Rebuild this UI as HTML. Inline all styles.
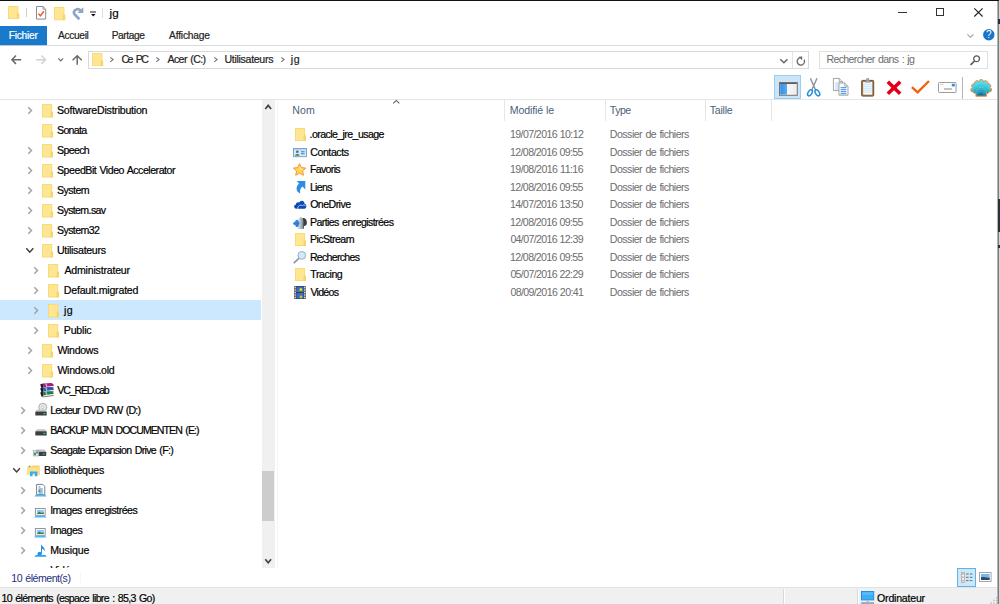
<!DOCTYPE html>
<html lang="fr"><head><meta charset="utf-8"><title>jg</title>
<style>

html,body{margin:0;padding:0;background:#fff;overflow:hidden}
#win{position:relative;width:1000px;height:604px;overflow:hidden;background:#fff;font-family:"Liberation Sans",sans-serif}
.t{position:absolute;white-space:pre;line-height:1;font-family:"Liberation Sans",sans-serif;-webkit-text-stroke:0.2px}
.g{-webkit-text-stroke:0}
.b{position:absolute}
svg{position:absolute;overflow:visible}

</style></head>
<body>
<div id="win">
<div class="b" style="left:0px;top:0px;width:998px;height:1.2px;background:#111;"></div><svg style="left:8.1px;top:6px" width="11.4" height="13" viewBox="0 0 11.4 13"><rect x="0" y="0" width="10.4" height="13" rx="0.6" fill="#f8d873"/><rect x="0.8" y="0.8" width="8.8" height="11.4" fill="#fee693"/><rect x="8.8" y="7.41" width="2.5" height="5.59" fill="#f7d46c"/></svg><div class="b" style="left:25.8px;top:7.5px;width:1.1px;height:9.5px;background:#cfcfcf;"></div><svg style="left:36px;top:6.2px" width="10.2" height="13.6" viewBox="0 0 10.2 13.6"><path d="M0.5 0.5 H7 L9.7 3.2 V13.1 H0.5 Z" fill="#fff" stroke="#8c8c8c" stroke-width="1"/><path d="M7 0.5 V3.2 H9.7" fill="none" stroke="#8c8c8c" stroke-width="0.8"/><path d="M2.4 7.6 L4.3 9.8 L8 5.2" fill="none" stroke="#e85a2c" stroke-width="1.4"/></svg><svg style="left:54px;top:6.5px" width="11.4" height="13.3" viewBox="0 0 11.4 13.3"><rect x="0" y="0" width="10.4" height="13.3" rx="0.6" fill="#f8d873"/><rect x="0.8" y="0.8" width="8.8" height="11.7" fill="#fee693"/><rect x="8.8" y="7.581" width="2.5" height="5.719" fill="#f7d46c"/></svg><svg style="left:72px;top:7px" width="12" height="13" viewBox="0 0 12 13"><path d="M7.4 12.2 L2.5 7.3 C1.2 5.6 2 2.8 5 2.2 C6.4 2 7.6 2.4 8.6 3.4" fill="none" stroke="#8fa3c6" stroke-width="2.7" stroke-linecap="butt"/><path d="M11.3 0.2 V5.9 H5.4 Z" fill="#8fa3c6"/></svg><div class="b" style="left:90px;top:11.2px;width:5.8px;height:1.4px;background:#8c8c8c;"></div><svg style="left:90.6px;top:14.1px" width="4.6" height="2.6" viewBox="0 0 4.6 2.6"><path d="M0 0 H4.6 L2.3 2.6 Z" fill="#111"/></svg><div class="b" style="left:102.3px;top:7.5px;width:1.2px;height:10px;background:#dedede;"></div><div class="b" style="left:898px;top:12.2px;width:8.8px;height:1px;background:#333;"></div><div class="b" style="left:936.3px;top:8.4px;width:7.8px;height:8px;background:transparent;box-sizing:border-box;border:1px solid #333"></div><svg style="left:974px;top:8.2px" width="9" height="8.8" viewBox="0 0 9 8.8"><path d="M0.3 0.3 L8.6 8.5 M8.6 0.3 L0.3 8.5" stroke="#222" stroke-width="1.1" fill="none"/></svg>
<div class="b" style="left:0px;top:26px;width:47px;height:19.4px;background:#1979ca;"></div><div class="b" style="left:0px;top:45px;width:998px;height:1px;background:#dadbdc;"></div><div class="b" style="left:0px;top:45px;width:47px;height:1px;background:#b9c9dc;"></div><svg style="left:966.6px;top:33.5px" width="6.8" height="3.6" viewBox="0 0 6.8 3.6"><path d="M0.3 0.3 L3.4 3.2 L6.5 0.3" fill="none" stroke="#a6a6a6" stroke-width="1.1"/></svg><svg style="left:982.6px;top:29.4px" width="11.6" height="11.6" viewBox="0 0 11.6 11.6"><circle cx="5.8" cy="5.8" r="5.7" fill="#1676cc"/><text x="5.8" y="9.3" font-family="Liberation Sans, sans-serif" font-size="10" fill="#fff" text-anchor="middle">?</text></svg>
<svg style="left:10.8px;top:55.3px" width="10.4" height="9.4" viewBox="0 0 10.4 9.4"><path d="M10.2 4.7 H1 M5 0.5 L0.9 4.7 L5 8.9" fill="none" stroke="#6a6a6a" stroke-width="1.5"/></svg><svg style="left:36px;top:55.3px" width="10.4" height="9.4" viewBox="0 0 10.4 9.4"><path d="M0.2 4.7 H9.4 M5.4 0.5 L9.5 4.7 L5.4 8.9" fill="none" stroke="#d2d2d2" stroke-width="1.5"/></svg><svg style="left:57.6px;top:57.8px" width="5.4" height="3.2" viewBox="0 0 5.4 3.2"><path d="M0.3 0.3 L2.7 2.8 L5.1 0.3" fill="none" stroke="#6a6a6a" stroke-width="1.2"/></svg><svg style="left:72.4px;top:55px" width="10.4" height="9.8" viewBox="0 0 10.4 9.8"><path d="M5.2 9.8 V1 M0.6 5.2 L5.2 0.8 L9.8 5.2" fill="none" stroke="#6a6a6a" stroke-width="1.5"/></svg><div class="b" style="left:88px;top:51px;width:721px;height:18px;background:#fff;box-sizing:border-box;border:1px solid #d9d9d9"></div><div class="b" style="left:792px;top:52px;width:1px;height:16px;background:#e4e4e4;"></div><svg style="left:92.3px;top:52.7px" width="11.3" height="13.1" viewBox="0 0 11.3 13.1"><rect x="0" y="0" width="10.3" height="13.1" rx="0.6" fill="#f8d873"/><rect x="0.8" y="0.8" width="8.7" height="11.5" fill="#fee693"/><rect x="8.7" y="7.467" width="2.5" height="5.633" fill="#f7d46c"/></svg><svg style="left:110.2px;top:57.1px" width="3.6" height="5.2" viewBox="0 0 3.6 5.2"><path d="M0.3 0.3 L3.1 2.6 L0.3 4.9" fill="none" stroke="#707070" stroke-width="1.1"/></svg><svg style="left:156.2px;top:57.1px" width="3.6" height="5.2" viewBox="0 0 3.6 5.2"><path d="M0.3 0.3 L3.1 2.6 L0.3 4.9" fill="none" stroke="#707070" stroke-width="1.1"/></svg><svg style="left:213.8px;top:57.1px" width="3.6" height="5.2" viewBox="0 0 3.6 5.2"><path d="M0.3 0.3 L3.1 2.6 L0.3 4.9" fill="none" stroke="#707070" stroke-width="1.1"/></svg><svg style="left:281px;top:57.1px" width="3.6" height="5.2" viewBox="0 0 3.6 5.2"><path d="M0.3 0.3 L3.1 2.6 L0.3 4.9" fill="none" stroke="#707070" stroke-width="1.1"/></svg><svg style="left:780.2px;top:58.8px" width="7.8" height="4.2" viewBox="0 0 7.8 4.2"><path d="M0.3 0.3 L3.9 3.8 L7.5 0.3" fill="none" stroke="#666" stroke-width="1.5"/></svg><svg style="left:796px;top:54.5px" width="10" height="11" viewBox="0 0 10 11"><path d="M8.1 4.6 A3.7 3.7 0 1 1 4.4 2.7" fill="none" stroke="#686868" stroke-width="1.3"/><path d="M2.6 1.7 L6.3 1.4 L6.1 5.2 Z" fill="#686868"/></svg><div class="b" style="left:819px;top:51px;width:168.5px;height:18px;background:#fff;box-sizing:border-box;border:1px solid #e0e0e0"></div><svg style="left:970px;top:54.5px" width="10.5" height="10.5" viewBox="0 0 10.5 10.5"><circle cx="6.6" cy="3.8" r="2.9" fill="none" stroke="#5a5a5a" stroke-width="1.3"/><path d="M4.5 6 L0.6 9.9" stroke="#5a5a5a" stroke-width="1.7" fill="none"/></svg>
<div class="b" style="left:774px;top:75px;width:27px;height:24px;background:#cce4f7;box-sizing:border-box;border:1px solid #9ccdf3"></div><svg style="left:779px;top:81.8px" width="18.8" height="13.8" viewBox="0 0 18.8 13.8"><defs><linearGradient id="pg" x1="0" x2="1"><stop offset="0" stop-color="#2f8fe2"/><stop offset="1" stop-color="#5aaaf0"/></linearGradient><linearGradient id="pw" x1="0" x2="1"><stop offset="0" stop-color="#fff"/><stop offset="1" stop-color="#ececec"/></linearGradient></defs><rect x="0.5" y="0.5" width="17.8" height="12.8" fill="url(#pw)" stroke="#747474" stroke-width="1"/><rect x="1.2" y="1.8" width="6.8" height="10.8" fill="url(#pg)"/><rect x="1" y="1" width="16.8" height="1" fill="#5c5c5c"/></svg><svg style="left:807px;top:78.3px" width="13.4" height="18.8" viewBox="0 0 13.4 18.8"><path d="M3.4 0.3 L8.6 12 M10 0.3 L4.8 12" stroke="#8b9098" stroke-width="1.4" fill="none"/><ellipse cx="3" cy="14.8" rx="1.9" ry="3.3" fill="none" stroke="#2b8fd8" stroke-width="1.5" transform="rotate(32 3 14.8)"/><ellipse cx="10.4" cy="14.8" rx="1.9" ry="3.3" fill="none" stroke="#2b8fd8" stroke-width="1.5" transform="rotate(-32 10.4 14.8)"/></svg><svg style="left:833.4px;top:78.2px" width="15.8" height="17.8" viewBox="0 0 15.8 17.8"><g transform="translate(0,0)"><path d="M0.4 0.4 H6.2 L9.4 3.6 V12.6 H0.4 Z" fill="#fff" stroke="#8c8c8c" stroke-width="0.8"/><path d="M6.2 0.4 V3.6 H9.4" fill="#e8e8e8" stroke="#8c8c8c" stroke-width="0.7"/><path d="M2 5 H7.8 M2 7 H7.8 M2 9 H7.8 M2 11 H7.8" stroke="#a9c9f5" stroke-width="0.9"/></g><g transform="translate(5.6,4.6)"><path d="M0.4 0.4 H6.2 L9.4 3.6 V12.6 H0.4 Z" fill="#fff" stroke="#8c8c8c" stroke-width="0.8"/><path d="M6.2 0.4 V3.6 H9.4" fill="#e8e8e8" stroke="#8c8c8c" stroke-width="0.7"/><path d="M2 5 H7.8 M2 7 H7.8 M2 9 H7.8 M2 11 H7.8" stroke="#5b9cf0" stroke-width="1.1"/></g></svg><svg style="left:860.9px;top:77.8px" width="13.4" height="18.8" viewBox="0 0 13.4 18.8"><rect x="0.7" y="2.4" width="12" height="15.7" rx="0.8" fill="#a77a50" stroke="#6e4a2a" stroke-width="1"/><rect x="2.2" y="4" width="9" height="12.6" fill="#fff"/><path d="M2.2 6.2 H11.2 M2.2 8.2 H11.2 M2.2 10.2 H11.2 M2.2 12.2 H11.2 M2.2 14.2 H11.2" stroke="#bfe0f4" stroke-width="1"/><path d="M4 4.2 V2.6 H5.6 V0.6 H7.8 V2.6 H9.4 V4.2 Z" fill="#a9a9a9" stroke="#7a7a7a" stroke-width="0.5"/></svg><svg style="left:886.2px;top:79.8px" width="16" height="15.6" viewBox="0 0 16 15.6"><path d="M1.8 1.8 L14.2 13.8 M14.2 1.8 L1.8 13.8" stroke="#e10018" stroke-width="3.6" fill="none"/></svg><svg style="left:911.4px;top:80.4px" width="19" height="14" viewBox="0 0 19 14"><path d="M0.9 7.2 L6.6 12.4 L18 1" stroke="#f0620f" stroke-width="2.4" fill="none"/></svg><svg style="left:938.2px;top:81.8px" width="18.6" height="11" viewBox="0 0 18.6 11"><rect x="0.5" y="0.5" width="17.6" height="10" rx="0.8" fill="#fdfdfd" stroke="#9c9c9c" stroke-width="1"/><rect x="13.8" y="1.8" width="3" height="2.6" fill="#2b8af0"/><rect x="6" y="6.2" width="8" height="1.6" fill="#b4b4b4"/><rect x="2" y="2" width="3.4" height="0.8" fill="#c8c8c8"/></svg><div class="b" style="left:962.2px;top:77px;width:1px;height:21.6px;background:#b4b4b4;"></div><svg style="left:970.8px;top:79px" width="20.4" height="17.6" viewBox="0 0 20.4 17.6"><defs><radialGradient id="sh" cx="0.5" cy="0.95" r="0.9"><stop offset="0" stop-color="#0f6c94"/><stop offset="0.3" stop-color="#1a8fb2"/><stop offset="0.6" stop-color="#3cc9dc"/><stop offset="1" stop-color="#62e6ec"/></radialGradient></defs><path d="M4.8 17.2 L5.2 14.8 C3.8 14.4 2.6 14 2.02 12.93 A1.70 1.70 0 0 1 1.67 8.77 A1.70 1.70 0 0 1 3.82 5.06 A1.70 1.70 0 0 1 7.84 2.89 A1.70 1.70 0 0 1 12.56 2.89 A1.70 1.70 0 0 1 16.58 5.06 A1.70 1.70 0 0 1 18.73 8.77 A1.70 1.70 0 0 1 18.38 12.93 C17.8 14 16.6 14.4 15.2 14.8 L15.6 17.2 Z" fill="url(#sh)" stroke="#f08a3c" stroke-width="1" stroke-linejoin="round"/><path d="M8.00 14.6 A2.20 2.53 0 0 1 12.40 14.6" fill="none" stroke="#9ff4f6" stroke-opacity="0.5" stroke-width="0.7"/><path d="M6.40 14.6 A3.80 4.37 0 0 1 14.00 14.6" fill="none" stroke="#9ff4f6" stroke-opacity="0.5" stroke-width="0.7"/><path d="M4.80 14.6 A5.40 6.21 0 0 1 15.60 14.6" fill="none" stroke="#9ff4f6" stroke-opacity="0.5" stroke-width="0.7"/></svg><div class="b" style="left:0px;top:99px;width:998px;height:1px;background:#e6e6e6;"></div>
<div class="b" style="left:0px;top:300px;width:260.5px;height:20px;background:#cce8ff;"></div><svg style="left:41.7px;top:103.5px" width="11.2" height="13.4" viewBox="0 0 11.2 13.4"><rect x="0" y="0" width="10.2" height="13.4" rx="0.6" fill="#f8d873"/><rect x="0.8" y="0.8" width="8.6" height="11.8" fill="#fee693"/><rect x="8.6" y="7.638" width="2.5" height="5.762" fill="#f7d46c"/></svg><svg style="left:41.7px;top:123.5px" width="11.2" height="13.4" viewBox="0 0 11.2 13.4"><rect x="0" y="0" width="10.2" height="13.4" rx="0.6" fill="#f8d873"/><rect x="0.8" y="0.8" width="8.6" height="11.8" fill="#fee693"/><rect x="8.6" y="7.638" width="2.5" height="5.762" fill="#f7d46c"/></svg><svg style="left:41.7px;top:143.5px" width="11.2" height="13.4" viewBox="0 0 11.2 13.4"><rect x="0" y="0" width="10.2" height="13.4" rx="0.6" fill="#f8d873"/><rect x="0.8" y="0.8" width="8.6" height="11.8" fill="#fee693"/><rect x="8.6" y="7.638" width="2.5" height="5.762" fill="#f7d46c"/></svg><svg style="left:41.7px;top:163.5px" width="11.2" height="13.4" viewBox="0 0 11.2 13.4"><rect x="0" y="0" width="10.2" height="13.4" rx="0.6" fill="#f8d873"/><rect x="0.8" y="0.8" width="8.6" height="11.8" fill="#fee693"/><rect x="8.6" y="7.638" width="2.5" height="5.762" fill="#f7d46c"/></svg><svg style="left:41.7px;top:183.5px" width="11.2" height="13.4" viewBox="0 0 11.2 13.4"><rect x="0" y="0" width="10.2" height="13.4" rx="0.6" fill="#f8d873"/><rect x="0.8" y="0.8" width="8.6" height="11.8" fill="#fee693"/><rect x="8.6" y="7.638" width="2.5" height="5.762" fill="#f7d46c"/></svg><svg style="left:41.7px;top:203.5px" width="11.2" height="13.4" viewBox="0 0 11.2 13.4"><rect x="0" y="0" width="10.2" height="13.4" rx="0.6" fill="#f8d873"/><rect x="0.8" y="0.8" width="8.6" height="11.8" fill="#fee693"/><rect x="8.6" y="7.638" width="2.5" height="5.762" fill="#f7d46c"/></svg><svg style="left:41.7px;top:223.5px" width="11.2" height="13.4" viewBox="0 0 11.2 13.4"><rect x="0" y="0" width="10.2" height="13.4" rx="0.6" fill="#f8d873"/><rect x="0.8" y="0.8" width="8.6" height="11.8" fill="#fee693"/><rect x="8.6" y="7.638" width="2.5" height="5.762" fill="#f7d46c"/></svg><svg style="left:41.7px;top:243.5px" width="11.2" height="13.4" viewBox="0 0 11.2 13.4"><rect x="0" y="0" width="10.2" height="13.4" rx="0.6" fill="#f8d873"/><rect x="0.8" y="0.8" width="8.6" height="11.8" fill="#fee693"/><rect x="8.6" y="7.638" width="2.5" height="5.762" fill="#f7d46c"/></svg><svg style="left:41.7px;top:343.5px" width="11.2" height="13.4" viewBox="0 0 11.2 13.4"><rect x="0" y="0" width="10.2" height="13.4" rx="0.6" fill="#f8d873"/><rect x="0.8" y="0.8" width="8.6" height="11.8" fill="#fee693"/><rect x="8.6" y="7.638" width="2.5" height="5.762" fill="#f7d46c"/></svg><svg style="left:41.7px;top:363.5px" width="11.2" height="13.4" viewBox="0 0 11.2 13.4"><rect x="0" y="0" width="10.2" height="13.4" rx="0.6" fill="#f8d873"/><rect x="0.8" y="0.8" width="8.6" height="11.8" fill="#fee693"/><rect x="8.6" y="7.638" width="2.5" height="5.762" fill="#f7d46c"/></svg><svg style="left:48.1px;top:263.5px" width="11.2" height="13.4" viewBox="0 0 11.2 13.4"><rect x="0" y="0" width="10.2" height="13.4" rx="0.6" fill="#f8d873"/><rect x="0.8" y="0.8" width="8.6" height="11.8" fill="#fee693"/><rect x="8.6" y="7.638" width="2.5" height="5.762" fill="#f7d46c"/></svg><svg style="left:48.1px;top:283.5px" width="11.2" height="13.4" viewBox="0 0 11.2 13.4"><rect x="0" y="0" width="10.2" height="13.4" rx="0.6" fill="#f8d873"/><rect x="0.8" y="0.8" width="8.6" height="11.8" fill="#fee693"/><rect x="8.6" y="7.638" width="2.5" height="5.762" fill="#f7d46c"/></svg><svg style="left:48.1px;top:303.5px" width="11.2" height="13.4" viewBox="0 0 11.2 13.4"><rect x="0" y="0" width="10.2" height="13.4" rx="0.6" fill="#f8d873"/><rect x="0.8" y="0.8" width="8.6" height="11.8" fill="#fee693"/><rect x="8.6" y="7.638" width="2.5" height="5.762" fill="#f7d46c"/></svg><svg style="left:48.1px;top:323.5px" width="11.2" height="13.4" viewBox="0 0 11.2 13.4"><rect x="0" y="0" width="10.2" height="13.4" rx="0.6" fill="#f8d873"/><rect x="0.8" y="0.8" width="8.6" height="11.8" fill="#fee693"/><rect x="8.6" y="7.638" width="2.5" height="5.762" fill="#f7d46c"/></svg><svg style="left:27.7px;top:107px" width="4" height="7" viewBox="0 0 4 7"><path d="M0.3 0.3 L3.5 3.5 L0.3 6.7" fill="none" stroke="#a3a3a3" stroke-width="1.5"/></svg><svg style="left:27.7px;top:147px" width="4" height="7" viewBox="0 0 4 7"><path d="M0.3 0.3 L3.5 3.5 L0.3 6.7" fill="none" stroke="#a3a3a3" stroke-width="1.5"/></svg><svg style="left:27.7px;top:167px" width="4" height="7" viewBox="0 0 4 7"><path d="M0.3 0.3 L3.5 3.5 L0.3 6.7" fill="none" stroke="#a3a3a3" stroke-width="1.5"/></svg><svg style="left:27.7px;top:187px" width="4" height="7" viewBox="0 0 4 7"><path d="M0.3 0.3 L3.5 3.5 L0.3 6.7" fill="none" stroke="#a3a3a3" stroke-width="1.5"/></svg><svg style="left:27.7px;top:207px" width="4" height="7" viewBox="0 0 4 7"><path d="M0.3 0.3 L3.5 3.5 L0.3 6.7" fill="none" stroke="#a3a3a3" stroke-width="1.5"/></svg><svg style="left:27.7px;top:227px" width="4" height="7" viewBox="0 0 4 7"><path d="M0.3 0.3 L3.5 3.5 L0.3 6.7" fill="none" stroke="#a3a3a3" stroke-width="1.5"/></svg><svg style="left:27.7px;top:347px" width="4" height="7" viewBox="0 0 4 7"><path d="M0.3 0.3 L3.5 3.5 L0.3 6.7" fill="none" stroke="#a3a3a3" stroke-width="1.5"/></svg><svg style="left:27.7px;top:367px" width="4" height="7" viewBox="0 0 4 7"><path d="M0.3 0.3 L3.5 3.5 L0.3 6.7" fill="none" stroke="#a3a3a3" stroke-width="1.5"/></svg><svg style="left:25.8px;top:247.9px" width="7.6" height="4.6" viewBox="0 0 7.6 4.6"><path d="M0.3 0.3 L3.8 4.2 L7.3 0.3" fill="none" stroke="#404040" stroke-width="1.5"/></svg><svg style="left:34.4px;top:267px" width="4" height="7" viewBox="0 0 4 7"><path d="M0.3 0.3 L3.5 3.5 L0.3 6.7" fill="none" stroke="#a3a3a3" stroke-width="1.5"/></svg><svg style="left:34.4px;top:287px" width="4" height="7" viewBox="0 0 4 7"><path d="M0.3 0.3 L3.5 3.5 L0.3 6.7" fill="none" stroke="#a3a3a3" stroke-width="1.5"/></svg><svg style="left:34.4px;top:307px" width="4" height="7" viewBox="0 0 4 7"><path d="M0.3 0.3 L3.5 3.5 L0.3 6.7" fill="none" stroke="#a3a3a3" stroke-width="1.5"/></svg><svg style="left:34.4px;top:327px" width="4" height="7" viewBox="0 0 4 7"><path d="M0.3 0.3 L3.5 3.5 L0.3 6.7" fill="none" stroke="#a3a3a3" stroke-width="1.5"/></svg><svg style="left:20.8px;top:407px" width="4" height="7" viewBox="0 0 4 7"><path d="M0.3 0.3 L3.5 3.5 L0.3 6.7" fill="none" stroke="#a3a3a3" stroke-width="1.5"/></svg><svg style="left:20.8px;top:427px" width="4" height="7" viewBox="0 0 4 7"><path d="M0.3 0.3 L3.5 3.5 L0.3 6.7" fill="none" stroke="#a3a3a3" stroke-width="1.5"/></svg><svg style="left:20.8px;top:447px" width="4" height="7" viewBox="0 0 4 7"><path d="M0.3 0.3 L3.5 3.5 L0.3 6.7" fill="none" stroke="#a3a3a3" stroke-width="1.5"/></svg><svg style="left:20.8px;top:487px" width="4" height="7" viewBox="0 0 4 7"><path d="M0.3 0.3 L3.5 3.5 L0.3 6.7" fill="none" stroke="#a3a3a3" stroke-width="1.5"/></svg><svg style="left:20.8px;top:507px" width="4" height="7" viewBox="0 0 4 7"><path d="M0.3 0.3 L3.5 3.5 L0.3 6.7" fill="none" stroke="#a3a3a3" stroke-width="1.5"/></svg><svg style="left:20.8px;top:527px" width="4" height="7" viewBox="0 0 4 7"><path d="M0.3 0.3 L3.5 3.5 L0.3 6.7" fill="none" stroke="#a3a3a3" stroke-width="1.5"/></svg><svg style="left:20.8px;top:547px" width="4" height="7" viewBox="0 0 4 7"><path d="M0.3 0.3 L3.5 3.5 L0.3 6.7" fill="none" stroke="#a3a3a3" stroke-width="1.5"/></svg><svg style="left:12.7px;top:468.2px" width="7.2" height="4.4" viewBox="0 0 7.2 4.4"><path d="M0.3 0.3 L3.6 4 L6.9 0.3" fill="none" stroke="#404040" stroke-width="1.5"/></svg><svg style="left:39.7px;top:383.4px" width="13.8" height="13.8" viewBox="0 0 13.8 13.8"><g transform="translate(0,0)"><path d="M0.2 1.4 L2.6 0.5 L3.8 4.3 L1.5 5.3 Z" fill="#2a1420"/><path d="M2.6 0.5 L11.6 0 L13.6 1.5 L13.6 2.9 L3.8 4.3 Z" fill="#a81c74"/><path d="M5.2 0.4 L6.6 0.3 L7.6 3.7 L6.2 3.9 Z" fill="#d8a8c8"/><path d="M3.8 4.3 L13.6 2.9 L13.6 4.2 L4 5.5 Z" fill="#f0f0f0"/><path d="M1.5 5.3 L4 5.6 L13.6 4.3" fill="none" stroke="#3a2a30" stroke-width="0.6"/></g><g transform="translate(0,4.1)"><path d="M0.2 1.4 L2.6 0.5 L3.8 4.3 L1.5 5.3 Z" fill="#2a1420"/><path d="M2.6 0.5 L11.6 0 L13.6 1.5 L13.6 2.9 L3.8 4.3 Z" fill="#2458b4"/><path d="M5.2 0.4 L6.6 0.3 L7.6 3.7 L6.2 3.9 Z" fill="#a8c0e8"/><path d="M3.8 4.3 L13.6 2.9 L13.6 4.2 L4 5.5 Z" fill="#f0f0f0"/><path d="M1.5 5.3 L4 5.6 L13.6 4.3" fill="none" stroke="#3a2a30" stroke-width="0.6"/></g><g transform="translate(0,8.2)"><path d="M0.2 1.4 L2.6 0.5 L3.8 4.3 L1.5 5.3 Z" fill="#2a1420"/><path d="M2.6 0.5 L11.6 0 L13.6 1.5 L13.6 2.9 L3.8 4.3 Z" fill="#1e8040"/><path d="M5.2 0.4 L6.6 0.3 L7.6 3.7 L6.2 3.9 Z" fill="#a0d0b0"/><path d="M3.8 4.3 L13.6 2.9 L13.6 4.2 L4 5.5 Z" fill="#f0f0f0"/><path d="M1.5 5.3 L4 5.6 L13.6 4.3" fill="none" stroke="#3a2a30" stroke-width="0.6"/></g></svg><svg style="left:34.5px;top:403px" width="12" height="13" viewBox="0 0 12 13"><circle cx="7.8" cy="4.3" r="4" fill="#e9e9ec" stroke="#9a9aa0" stroke-width="0.8"/><circle cx="7.8" cy="4.3" r="1.3" fill="#fff" stroke="#a8a8ae" stroke-width="0.6"/><path d="M0.3 8.4 L2 6.6 H10 L11.7 8.4 Z" fill="#c8c8cc"/><rect x="0.3" y="8.4" width="11.4" height="4.2" rx="0.5" fill="#3c3e42"/><rect x="8.4" y="10" width="2" height="1.2" fill="#38d04a"/></svg><svg style="left:34.5px;top:429.4px" width="12" height="6.6" viewBox="0 0 12 6.6"><path d="M0.3 2.3 L2 0.3 H10 L11.7 2.3 Z" fill="#c4c4c8"/><rect x="0.3" y="2.3" width="11.4" height="4.1" rx="0.5" fill="#3c3e42"/><rect x="8.4" y="3.8" width="2" height="1.2" fill="#38d04a"/></svg><svg style="left:33.2px;top:449.4px" width="13.4" height="7.2" viewBox="0 0 13.4 7.2"><path d="M1.6 2.8 L3.2 0.6 H11.6 L13.1 2.8 Z" fill="#c4c4c8"/><rect x="1.6" y="2.8" width="11.6" height="4.2" rx="0.5" fill="#3c3e42"/><rect x="0.2" y="1.6" width="5.6" height="5.4" fill="#dfe6ea" stroke="#8a9096" stroke-width="0.5"/><rect x="1" y="3.6" width="2" height="2.6" fill="#3a9a4a"/><rect x="3.2" y="2.4" width="1.8" height="2" fill="#4a7ac8"/><rect x="9.8" y="4.4" width="2" height="1.2" fill="#38d04a"/></svg><svg style="left:26.6px;top:465.2px" width="13.4" height="11.4" viewBox="0 0 13.4 11.4"><path d="M0.4 1.6 H4.6 L5.8 0.4 H12.6 V10 H0.4 Z" fill="#f8d26a"/><rect x="0.4" y="2.6" width="12.6" height="7.6" fill="#fde08a"/><rect x="1.8" y="0.8" width="1.6" height="1.2" fill="#4aa84a"/><path d="M3 11.3 V6.4 H10.4 V11.3 H7.8 V8.6 H5.6 V11.3 Z" fill="#30b2f2"/></svg><svg style="left:34px;top:484.2px" width="12.6" height="12.6" viewBox="0 0 12.6 12.6"><path d="M2.6 0.4 H8.8 L10.8 2.4 V10.6 H2.6 Z" fill="#fff" stroke="#7c8288" stroke-width="1"/><path d="M4.6 3 H6.4 M4.6 5 H8.8 M4.6 7 H8.8 M4.6 9 H8.8" stroke="#3a8ad8" stroke-width="1"/><rect x="4.4" y="5.8" width="2" height="2.4" fill="#5aa04a"/><path d="M1.8 10.8 H11.4 L12.6 12.6 H0.4 Z" fill="#4ab8f6"/></svg><svg style="left:34px;top:508px" width="12.6" height="9.6" viewBox="0 0 12.6 9.6"><rect x="1.4" y="0.5" width="9.8" height="6.8" fill="#fff" stroke="#8a8f96" stroke-width="0.9"/><rect x="2.8" y="1.9" width="7" height="4" fill="#8ecaf4"/><path d="M2.8 5.9 L5.4 3.6 L7.4 5 L9.8 4.2 V5.9 Z" fill="#3e7a46"/><path d="M1.6 7.8 H11 L12.4 9.6 H0.2 Z" fill="#4ab8f6"/></svg><svg style="left:34px;top:528px" width="12.6" height="9.6" viewBox="0 0 12.6 9.6"><rect x="1.4" y="0.5" width="9.8" height="6.8" fill="#fff" stroke="#8a8f96" stroke-width="0.9"/><rect x="2.8" y="1.9" width="7" height="4" fill="#8ecaf4"/><path d="M2.8 5.9 L5.4 3.6 L7.4 5 L9.8 4.2 V5.9 Z" fill="#3e7a46"/><path d="M1.6 7.8 H11 L12.4 9.6 H0.2 Z" fill="#4ab8f6"/></svg><svg style="left:34px;top:544px" width="12.6" height="13" viewBox="0 0 12.6 13"><path d="M7 0.2 C8 2.6 11.6 3.4 10.6 7.4 C10.2 5.6 8.8 5 8 4.8 V9.6 C8 11.6 3.4 12.2 3.4 9.8 C3.4 8 6 7.6 7 8.4 Z" fill="#1e8ef0"/><path d="M1.8 11 H11.4 L12.6 12.8 H0.4 Z" fill="#2aa0f4"/></svg><div class="b" style="left:0;top:560px;width:261px;height:8px;overflow:hidden"><span class="t" style="left:50.4px;top:5.1px;font-size:10.6px;letter-spacing:-0.3px;color:#000">Vidéos</span></div><div class="b" style="left:79.5px;top:573px;width:1px;height:10px;background:#f5f5f5;"></div><div class="b" style="left:277px;top:100px;width:1px;height:468px;background:#f6f6f6;"></div><div class="b" style="left:262px;top:100px;width:13px;height:468px;background:#f0f0f0;"></div><div class="b" style="left:262px;top:471.2px;width:12.2px;height:49.7px;background:#cdcdcd;"></div><svg style="left:264.9px;top:105.4px" width="6.4" height="4.4" viewBox="0 0 6.4 4.4"><path d="M0.3 4.1 L3.2 0.4 L6.1 4.1" fill="none" stroke="#404040" stroke-width="1.7"/></svg><svg style="left:264.8px;top:559.2px" width="6.4" height="4.2" viewBox="0 0 6.4 4.2"><path d="M0.3 0.3 L3.2 3.8 L6.1 0.3" fill="none" stroke="#404040" stroke-width="1.7"/></svg>
<div class="b" style="left:504px;top:100px;width:1px;height:21px;background:#e6e6e6;"></div><div class="b" style="left:605px;top:100px;width:1px;height:21px;background:#e6e6e6;"></div><div class="b" style="left:704.5px;top:100px;width:1px;height:21px;background:#e6e6e6;"></div><div class="b" style="left:771px;top:100px;width:1px;height:21px;background:#e6e6e6;"></div><svg style="left:393px;top:100px" width="6.6" height="3.6" viewBox="0 0 6.6 3.6"><path d="M0.3 3.3 L3.3 0.4 L6.3 3.3" fill="none" stroke="#5c5c5c" stroke-width="1.1"/></svg>
<svg style="left:295.1px;top:128px" width="11.1" height="13" viewBox="0 0 11.1 13"><rect x="0" y="0" width="10.1" height="13" rx="0.6" fill="#f8d873"/><rect x="0.8" y="0.8" width="8.5" height="11.4" fill="#fee693"/><rect x="8.5" y="7.41" width="2.5" height="5.59" fill="#f7d46c"/></svg><svg style="left:293px;top:148.1px" width="14" height="9.4" viewBox="0 0 14 9.4"><rect x="0.5" y="0.5" width="13" height="8.2" fill="#d4e9fa" stroke="#6a9fd0" stroke-width="0.9"/><rect x="1.2" y="1.2" width="11.6" height="1.2" fill="#b4d4f0"/><circle cx="4.3" cy="3.7" r="1.3" fill="#8a5a3a"/><path d="M2 7.8 C2 5.4 6.6 5.4 6.6 7.8 Z" fill="#3a8c4c"/><path d="M8 3.8 H11.6 M8 5.8 H11.6" stroke="#3a7ac4" stroke-width="1"/></svg><svg style="left:293.3px;top:163.4px" width="13.2" height="12.8" viewBox="0 0 13.2 12.8"><path d="M6.6 0.6 L8.5 4.6 L12.8 5.1 L9.6 8 L10.5 12.3 L6.6 10.1 L2.7 12.3 L3.6 8 L0.4 5.1 L4.7 4.6 Z" fill="#ffd553" stroke="#f2963a" stroke-width="1" stroke-linejoin="round"/><path d="M6.6 3 L7.8 5.6 L10.4 5.9 L6.6 7.5 Z" fill="#ffe89a"/></svg><svg style="left:295.6px;top:181.2px" width="9.4" height="12.6" viewBox="0 0 9.4 12.6"><path d="M0.9 0.1 H9.3 V8.4 L6.5 5.5 C4.6 7 3.5 9.2 4.3 12.4 C0.4 11 -1 6.6 3 2.5 Z" fill="#2a8ee6"/></svg><svg style="left:293.8px;top:200px" width="12.4" height="9" viewBox="0 0 12.4 9"><path d="M2.4 8.8 C-0.6 8.6 -0.4 4.8 2 4.6 C2 2.6 4 1.8 5.2 2.8 C6 -0.2 10.4 -0.2 10.6 3.8 C13 4 13 8.6 10.4 8.8 Z" fill="#0b49b8"/><path d="M3.6 8.8 C3.8 5.8 6.4 4.4 8.4 5.6 C9.2 4.6 11.2 4.8 11.8 6.2" fill="none" stroke="#fff" stroke-width="0.7"/></svg><svg style="left:293px;top:216.5px" width="14" height="12.4" viewBox="0 0 14 12.4"><defs><linearGradient id="sg" x1="0" x2="1"><stop offset="0" stop-color="#eef1f3"/><stop offset="0.55" stop-color="#a9b6be"/><stop offset="1" stop-color="#73848e"/></linearGradient></defs><path d="M9.4 1.2 C12.4 0.6 14.2 3.4 13.8 6.4 C13.6 8.4 12.2 9.2 11 8.8 L11 11.6 L8.6 11.6 Z" fill="#3a3c3f"/><path d="M4.4 12 C3.8 9 5 6.4 5.2 3.6 C5.6 1 7 0.1 8.4 0.3 C10 0.7 10.6 3 10.4 6 C10.2 9 10.6 11 10.8 12 Z" fill="url(#sg)"/><circle cx="1.9" cy="6.4" r="1.7" fill="#2a80d8"/><circle cx="3.9" cy="4.4" r="1.7" fill="#3a8ce0"/><circle cx="4" cy="8.4" r="1.6" fill="#2a80d8"/><circle cx="4.6" cy="6.4" r="1.8" fill="#2a80d8"/></svg><svg style="left:295.1px;top:233px" width="11.1" height="13" viewBox="0 0 11.1 13"><rect x="0" y="0" width="10.1" height="13" rx="0.6" fill="#f8d873"/><rect x="0.8" y="0.8" width="8.5" height="11.4" fill="#fee693"/><rect x="8.5" y="7.41" width="2.5" height="5.59" fill="#f7d46c"/></svg><svg style="left:293.4px;top:251.4px" width="13.4" height="12.8" viewBox="0 0 13.4 12.8"><circle cx="8.8" cy="4.4" r="3.9" fill="#d2e9fb" stroke="#8ca6c0" stroke-width="0.9"/><path d="M5.8 7.4 L0.8 12.2" stroke="#8a96a4" stroke-width="1.6" fill="none"/></svg><svg style="left:295.1px;top:268px" width="11.1" height="13" viewBox="0 0 11.1 13"><rect x="0" y="0" width="10.1" height="13" rx="0.6" fill="#f8d873"/><rect x="0.8" y="0.8" width="8.5" height="11.4" fill="#fee693"/><rect x="8.5" y="7.41" width="2.5" height="5.59" fill="#f7d46c"/></svg><svg style="left:294.1px;top:286.3px" width="12" height="13" viewBox="0 0 12 13"><rect x="0" y="0" width="11.9" height="13" fill="#6c6c6c"/><rect x="2.1" y="0.3" width="7.7" height="12.4" fill="#26282c"/><rect x="2.3" y="0.7" width="7.3" height="5.5" fill="#2c6ee0"/><rect x="2.3" y="7" width="7.3" height="5.4" fill="#2c6ee0"/><circle cx="6.9" cy="3.5" r="1.5" fill="#e6cf20"/><rect x="2.5" y="4.6" width="2.2" height="1.3" fill="#e0503a"/><rect x="4.9" y="5.2" width="4.6" height="1" fill="#2a9a3a"/><circle cx="7" cy="11" r="1.4" fill="#d8c020"/><rect x="6" y="7" width="2" height="1.6" fill="#a05a40"/><rect x="0.7" y="0.9" width="1" height="1.2" fill="#f4f4f4"/><rect x="10.2" y="0.9" width="1" height="1.2" fill="#f4f4f4"/><rect x="0.7" y="3.4" width="1" height="1.2" fill="#f4f4f4"/><rect x="10.2" y="3.4" width="1" height="1.2" fill="#f4f4f4"/><rect x="0.7" y="5.9" width="1" height="1.2" fill="#f4f4f4"/><rect x="10.2" y="5.9" width="1" height="1.2" fill="#f4f4f4"/><rect x="0.7" y="8.4" width="1" height="1.2" fill="#f4f4f4"/><rect x="10.2" y="8.4" width="1" height="1.2" fill="#f4f4f4"/><rect x="0.7" y="10.9" width="1" height="1.2" fill="#f4f4f4"/><rect x="10.2" y="10.9" width="1" height="1.2" fill="#f4f4f4"/></svg>
<div class="b" style="left:0px;top:587px;width:998px;height:17px;background:#f0f0f0;"></div><div class="b" style="left:0px;top:587px;width:998px;height:1px;background:#e2e2e2;"></div><div class="b" style="left:783px;top:589px;width:1px;height:15px;background:#d8d8d8;"></div><div class="b" style="left:784px;top:589px;width:1px;height:15px;background:#fff;"></div><div class="b" style="left:857px;top:589px;width:1px;height:15px;background:#d8d8d8;"></div><div class="b" style="left:858px;top:589px;width:1px;height:15px;background:#fff;"></div><svg style="left:861px;top:591.2px" width="13.4" height="12.8" viewBox="0 0 13.4 12.8"><rect x="0.5" y="0.5" width="12.2" height="8.4" fill="#3aaef6" stroke="#2090e2" stroke-width="1"/><rect x="1.3" y="1.3" width="10.6" height="2.6" fill="#58bcf8"/><rect x="5.4" y="9.4" width="2.4" height="1.8" fill="#b4bcc6"/><rect x="0.1" y="11.3" width="13" height="1.6" fill="#8c9cb6"/></svg><div class="b" style="left:957.4px;top:568px;width:18.6px;height:19.3px;background:#cce8f7;box-sizing:border-box;border:1px solid #62b2ea"></div><svg style="left:961px;top:572px" width="12" height="11" viewBox="0 0 12 11"><rect x="0.4" y="0.4" width="3" height="10" fill="#fff" stroke="#9aa0a8" stroke-width="0.7"/><rect x="1" y="1.2" width="1.8" height="1.8" fill="#e8a0a0"/><rect x="1" y="4.4" width="1.8" height="1.8" fill="#e8a0a0"/><rect x="1" y="7.6" width="1.8" height="1.8" fill="#e8a0a0"/><path d="M5 2 H7.6 M8.8 2 H11.4 M5 5.3 H7.6 M8.8 5.3 H11.4 M5 8.6 H7.6 M8.8 8.6 H11.4" stroke="#6a7078" stroke-width="1"/></svg><svg style="left:978.8px;top:572px" width="12.6" height="10" viewBox="0 0 12.6 10"><rect x="0.5" y="0.5" width="11.6" height="9" fill="#fff" stroke="#9a9ea4" stroke-width="0.9"/><rect x="2" y="2" width="8.6" height="6" fill="#7ab8e8"/><path d="M2 8 V5.4 C4.4 4.4 7.4 6.4 10.6 5.6 V8 Z" fill="#2c4a6a"/></svg><svg style="left:987.5px;top:596.5px" width="10" height="7" viewBox="0 0 10 7"><rect x="8" y="0" width="1.4" height="1.4" fill="#b8b8b8"/><rect x="5.3" y="2.7" width="1.4" height="1.4" fill="#b8b8b8"/><rect x="8" y="2.7" width="1.4" height="1.4" fill="#b8b8b8"/><rect x="2.6" y="5.4" width="1.4" height="1.4" fill="#b8b8b8"/><rect x="5.3" y="5.4" width="1.4" height="1.4" fill="#b8b8b8"/><rect x="8" y="5.4" width="1.4" height="1.4" fill="#b8b8b8"/></svg><div class="b" style="left:997px;top:0px;width:1px;height:604px;background:#b4b4b4;"></div><div class="b" style="left:998px;top:0px;width:1px;height:604px;background:#7c7c7c;"></div><div class="b" style="left:999px;top:0px;width:1px;height:604px;background:#d6d6d6;"></div><div class="b" style="left:0px;top:0px;width:998.5px;height:1.2px;background:#111;"></div><div class="b" style="left:998px;top:18.5px;width:2px;height:5.5px;background:#2c2a4a;"></div><div class="b" style="left:998px;top:199.2px;width:2px;height:33px;background:#2c3038;"></div><div class="b" style="left:998px;top:245px;width:2px;height:3.2px;background:#2c3038;"></div>
<span class="t" style="left:109.44px;top:7.00px;font-size:11.6px;letter-spacing:0.207px;word-spacing:-0.331px;color:#000">jg</span>
<span class="t" style="left:8.85px;top:31.30px;font-size:10.2px;letter-spacing:-0.272px;word-spacing:0.435px;color:#fff">Fichier</span>
<span class="t" style="left:58.10px;top:31.30px;font-size:10.2px;letter-spacing:-0.343px;word-spacing:0.549px;color:#222">Accueil</span>
<span class="t" style="left:111.75px;top:31.30px;font-size:10.2px;letter-spacing:-0.434px;word-spacing:0.694px;color:#222">Partage</span>
<span class="t" style="left:169.10px;top:31.30px;font-size:10.2px;letter-spacing:-0.184px;word-spacing:0.294px;color:#222">Affichage</span>
<span class="t" style="left:121.48px;top:54.00px;font-size:10.6px;letter-spacing:-1.546px;word-spacing:2.474px;color:#222">Ce PC</span>
<span class="t" style="left:167.40px;top:54.00px;font-size:10.6px;letter-spacing:-0.568px;word-spacing:0.909px;color:#222">Acer (C:)</span>
<span class="t" style="left:224.47px;top:54.00px;font-size:10.6px;letter-spacing:-0.310px;word-spacing:0.496px;color:#222">Utilisateurs</span>
<span class="t" style="left:290.74px;top:54.00px;font-size:10.6px;letter-spacing:0.658px;word-spacing:-1.052px;color:#222">jg</span>
<span class="t g" style="left:826.51px;top:54.30px;font-size:10.6px;letter-spacing:-0.660px;word-spacing:1.057px;color:#6d6d6d">Rechercher dans : jg</span>
<span class="t" style="left:57.04px;top:104.70px;font-size:10.6px;letter-spacing:-0.228px;word-spacing:0.364px;color:#000">SoftwareDistribution</span>
<span class="t" style="left:57.04px;top:124.70px;font-size:10.6px;letter-spacing:-0.684px;word-spacing:1.095px;color:#000">Sonata</span>
<span class="t" style="left:57.04px;top:144.70px;font-size:10.6px;letter-spacing:-0.645px;word-spacing:1.032px;color:#000">Speech</span>
<span class="t" style="left:57.04px;top:164.70px;font-size:10.6px;letter-spacing:-0.473px;word-spacing:0.757px;color:#000">SpeedBit Video Accelerator</span>
<span class="t" style="left:57.04px;top:184.70px;font-size:10.6px;letter-spacing:-0.558px;word-spacing:0.893px;color:#000">System</span>
<span class="t" style="left:57.04px;top:204.70px;font-size:10.6px;letter-spacing:-0.631px;word-spacing:1.009px;color:#000">System.sav</span>
<span class="t" style="left:57.04px;top:224.70px;font-size:10.6px;letter-spacing:-0.619px;word-spacing:0.991px;color:#000">System32</span>
<span class="t" style="left:56.97px;top:244.70px;font-size:10.6px;letter-spacing:-0.310px;word-spacing:0.496px;color:#000">Utilisateurs</span>
<span class="t" style="left:64.40px;top:264.70px;font-size:10.6px;letter-spacing:-0.202px;word-spacing:0.323px;color:#000">Administrateur</span>
<span class="t" style="left:63.81px;top:284.70px;font-size:10.6px;letter-spacing:-0.205px;word-spacing:0.328px;color:#000">Default.migrated</span>
<span class="t" style="left:64.04px;top:304.70px;font-size:10.6px;letter-spacing:0.358px;word-spacing:-0.572px;color:#000">jg</span>
<span class="t" style="left:63.81px;top:324.70px;font-size:10.6px;letter-spacing:-0.207px;word-spacing:0.331px;color:#000">Public</span>
<span class="t" style="left:57.40px;top:344.70px;font-size:10.6px;letter-spacing:-0.323px;word-spacing:0.517px;color:#000">Windows</span>
<span class="t" style="left:57.40px;top:364.70px;font-size:10.6px;letter-spacing:-0.281px;word-spacing:0.449px;color:#000">Windows.old</span>
<span class="t" style="left:57.37px;top:384.70px;font-size:10.6px;letter-spacing:-1.181px;word-spacing:1.889px;color:#000">VC_RED.cab</span>
<span class="t" style="left:50.21px;top:404.70px;font-size:10.6px;letter-spacing:-0.828px;word-spacing:1.325px;color:#000">Lecteur DVD RW (D:)</span>
<span class="t" style="left:50.21px;top:424.70px;font-size:10.6px;letter-spacing:-0.972px;word-spacing:1.555px;color:#000">BACKUP MIJN DOCUMENTEN (E:)</span>
<span class="t" style="left:50.34px;top:444.70px;font-size:10.6px;letter-spacing:-0.704px;word-spacing:1.127px;color:#000">Seagate Expansion Drive (F:)</span>
<span class="t" style="left:43.91px;top:464.70px;font-size:10.6px;letter-spacing:-0.275px;word-spacing:0.440px;color:#000">Bibliothèques</span>
<span class="t" style="left:50.21px;top:484.70px;font-size:10.6px;letter-spacing:-0.263px;word-spacing:0.421px;color:#000">Documents</span>
<span class="t" style="left:50.14px;top:504.70px;font-size:10.6px;letter-spacing:-0.510px;word-spacing:0.817px;color:#000">Images enregistrées</span>
<span class="t" style="left:50.14px;top:524.70px;font-size:10.6px;letter-spacing:-0.431px;word-spacing:0.689px;color:#000">Images</span>
<span class="t" style="left:50.21px;top:544.70px;font-size:10.6px;letter-spacing:-0.155px;word-spacing:0.248px;color:#000">Musique</span>
<span class="t g" style="left:11.30px;top:572.60px;font-size:10.6px;letter-spacing:-0.496px;word-spacing:0.793px;color:#1e2f7e">10 élément(s)</span>
<span class="t" style="left:1.60px;top:592.60px;font-size:10.6px;letter-spacing:-0.694px;word-spacing:1.110px;color:#000">10 éléments (espace libre : 85,3 Go)</span>
<span class="t" style="left:877.10px;top:592.60px;font-size:10.6px;letter-spacing:-0.230px;word-spacing:0.368px;color:#000">Ordinateur</span>
<span class="t g" style="left:292.31px;top:104.90px;font-size:10.6px;letter-spacing:0.120px;word-spacing:-0.192px;color:#4c607a">Nom</span>
<span class="t g" style="left:509.81px;top:104.90px;font-size:10.6px;letter-spacing:-0.128px;word-spacing:0.204px;color:#4c607a">Modifié le</span>
<span class="t g" style="left:609.84px;top:104.90px;font-size:10.6px;letter-spacing:-0.538px;word-spacing:0.861px;color:#4c607a">Type</span>
<span class="t g" style="left:709.84px;top:104.90px;font-size:10.6px;letter-spacing:-0.254px;word-spacing:0.406px;color:#4c607a">Taille</span>
<span class="t" style="left:309.59px;top:129.20px;font-size:10.6px;letter-spacing:-0.588px;word-spacing:0.941px;color:#000">.oracle_jre_usage</span>
<span class="t g" style="left:510.00px;top:129.20px;font-size:10.6px;letter-spacing:-0.598px;word-spacing:0.359px;color:#6d6d6d">19/07/2016 10:12</span>
<span class="t g" style="left:609.81px;top:129.20px;font-size:10.6px;letter-spacing:-0.510px;word-spacing:0.815px;color:#6d6d6d">Dossier de fichiers</span>
<span class="t" style="left:310.18px;top:146.70px;font-size:10.6px;letter-spacing:-0.414px;word-spacing:0.662px;color:#000">Contacts</span>
<span class="t g" style="left:510.00px;top:146.70px;font-size:10.6px;letter-spacing:-0.623px;word-spacing:0.374px;color:#6d6d6d">12/08/2016 09:55</span>
<span class="t g" style="left:609.81px;top:146.70px;font-size:10.6px;letter-spacing:-0.510px;word-spacing:0.815px;color:#6d6d6d">Dossier de fichiers</span>
<span class="t" style="left:309.91px;top:164.20px;font-size:10.6px;letter-spacing:-0.671px;word-spacing:1.073px;color:#000">Favoris</span>
<span class="t g" style="left:510.00px;top:164.20px;font-size:10.6px;letter-spacing:-0.563px;word-spacing:0.338px;color:#6d6d6d">19/08/2016 11:16</span>
<span class="t g" style="left:609.81px;top:164.20px;font-size:10.6px;letter-spacing:-0.510px;word-spacing:0.815px;color:#6d6d6d">Dossier de fichiers</span>
<span class="t" style="left:309.91px;top:181.70px;font-size:10.6px;letter-spacing:-0.686px;word-spacing:1.097px;color:#000">Liens</span>
<span class="t g" style="left:510.00px;top:181.70px;font-size:10.6px;letter-spacing:-0.623px;word-spacing:0.374px;color:#6d6d6d">12/08/2016 09:55</span>
<span class="t g" style="left:609.81px;top:181.70px;font-size:10.6px;letter-spacing:-0.510px;word-spacing:0.815px;color:#6d6d6d">Dossier de fichiers</span>
<span class="t" style="left:310.20px;top:199.20px;font-size:10.6px;letter-spacing:-0.558px;word-spacing:0.894px;color:#000">OneDrive</span>
<span class="t g" style="left:510.00px;top:199.20px;font-size:10.6px;letter-spacing:-0.623px;word-spacing:0.374px;color:#6d6d6d">14/07/2016 13:50</span>
<span class="t g" style="left:609.81px;top:199.20px;font-size:10.6px;letter-spacing:-0.510px;word-spacing:0.815px;color:#6d6d6d">Dossier de fichiers</span>
<span class="t" style="left:309.91px;top:216.70px;font-size:10.6px;letter-spacing:-0.583px;word-spacing:0.933px;color:#000">Parties enregistrées</span>
<span class="t g" style="left:510.00px;top:216.70px;font-size:10.6px;letter-spacing:-0.623px;word-spacing:0.374px;color:#6d6d6d">12/08/2016 09:55</span>
<span class="t g" style="left:609.81px;top:216.70px;font-size:10.6px;letter-spacing:-0.510px;word-spacing:0.815px;color:#6d6d6d">Dossier de fichiers</span>
<span class="t" style="left:309.91px;top:234.20px;font-size:10.6px;letter-spacing:-0.539px;word-spacing:0.863px;color:#000">PicStream</span>
<span class="t g" style="left:510.39px;top:234.20px;font-size:10.6px;letter-spacing:-0.647px;word-spacing:0.388px;color:#6d6d6d">04/07/2016 12:39</span>
<span class="t g" style="left:609.81px;top:234.20px;font-size:10.6px;letter-spacing:-0.510px;word-spacing:0.815px;color:#6d6d6d">Dossier de fichiers</span>
<span class="t" style="left:309.91px;top:251.70px;font-size:10.6px;letter-spacing:-0.712px;word-spacing:1.138px;color:#000">Recherches</span>
<span class="t g" style="left:510.00px;top:251.70px;font-size:10.6px;letter-spacing:-0.623px;word-spacing:0.374px;color:#6d6d6d">12/08/2016 09:55</span>
<span class="t g" style="left:609.81px;top:251.70px;font-size:10.6px;letter-spacing:-0.510px;word-spacing:0.815px;color:#6d6d6d">Dossier de fichiers</span>
<span class="t" style="left:310.34px;top:269.20px;font-size:10.6px;letter-spacing:-0.416px;word-spacing:0.666px;color:#000">Tracing</span>
<span class="t g" style="left:510.39px;top:269.20px;font-size:10.6px;letter-spacing:-0.647px;word-spacing:0.388px;color:#6d6d6d">05/07/2016 22:29</span>
<span class="t g" style="left:609.81px;top:269.20px;font-size:10.6px;letter-spacing:-0.510px;word-spacing:0.815px;color:#6d6d6d">Dossier de fichiers</span>
<span class="t" style="left:310.47px;top:286.70px;font-size:10.6px;letter-spacing:-0.742px;word-spacing:1.187px;color:#000">Vidéos</span>
<span class="t g" style="left:510.39px;top:286.70px;font-size:10.6px;letter-spacing:-0.622px;word-spacing:0.373px;color:#6d6d6d">08/09/2016 20:41</span>
<span class="t g" style="left:609.81px;top:286.70px;font-size:10.6px;letter-spacing:-0.510px;word-spacing:0.815px;color:#6d6d6d">Dossier de fichiers</span>
</div>
</body></html>
